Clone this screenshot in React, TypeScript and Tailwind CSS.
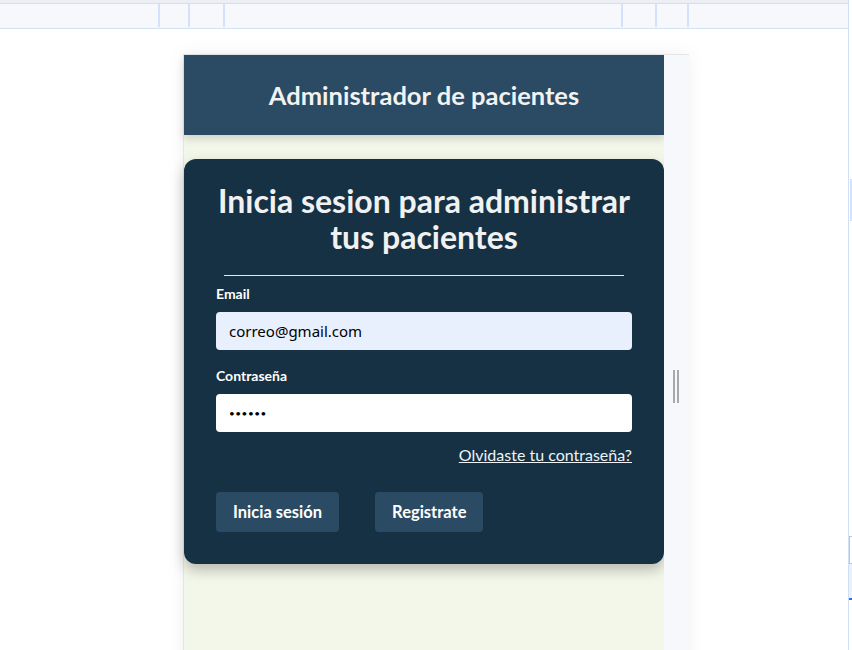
import { useState } from 'react'

const font = { fontFamily: 'Lato, "Noto Sans", sans-serif' }

function TopRuler() {
  return (
    <div className="flex flex-col">
      <div className="h-[4px] bg-[#eceef3] border-b border-[#cfdff8]" />
      <div className="h-[25px] bg-[#f7f8fc] border-b border-[#d3e1f3] flex items-stretch pb-[1px]">
        <div className="w-[160px] border-r-2 border-[#d2e2fb]" />
        <div className="w-[30px] border-r-2 border-[#d2e2fb]" />
        <div className="w-[35px] border-r-2 border-[#d2e2fb]" />
        <div className="w-[398px] border-r-2 border-[#d2e2fb]" />
        <div className="w-[34px] border-r-2 border-[#d2e2fb]" />
        <div className="w-[32px] border-r-2 border-[#d2e2fb]" />
        <div className="flex-1" />
      </div>
    </div>
  )
}

function LoginCard() {
  const [email, setEmail] = useState('correo@gmail.com')
  const [password, setPassword] = useState('123456')

  return (
    <div className="mt-[24px] bg-[#163144] rounded-[12px] px-[32px] pt-[24px] pb-[32px] shadow-[0_6px_14px_rgba(0,0,0,0.25)]">
      <h2 className="text-[32px] leading-[36px] font-bold text-center text-[#f1f1f1]">
        Inicia sesion para administrar tus pacientes
      </h2>
      <hr className="w-[400px] mx-auto mt-[20px] border-0 border-t border-[#e8e8e8]" />

      {/* Email */}
      <label className="block mt-[10px] text-[14px] leading-[16px] font-bold text-white">Email</label>
      <input
        type="email"
        value={email}
        onChange={(e) => setEmail(e.target.value)}
        className="mt-[10px] w-full h-[38px] rounded-[4px] bg-[#e8f0fe] px-[13px] text-[15px] text-black outline-none"
        style={{ fontFamily: '"Noto Sans", sans-serif' }}
      />

      {/* Password */}
      <label className="block mt-[18px] text-[14px] leading-[16px] font-bold text-white">Contraseña</label>
      <input
        type="password"
        value={password}
        onChange={(e) => setPassword(e.target.value)}
        className="mt-[10px] w-full h-[38px] rounded-[4px] bg-white px-[13px] text-[10px] tracking-[0.5px] text-black outline-none"
      />

      <div className="flex justify-end mt-[13px]">
        <a href="#" className="text-[16px] leading-[20px] text-[#eef3f7] underline">
          Olvidaste tu contraseña?
        </a>
      </div>

      <div className="flex gap-[36px] mt-[27px]">
        <button className="h-[40px] px-[17px] rounded-[4px] bg-[#2a4b63] text-white text-[16.5px] font-bold">
          Inicia sesión
        </button>
        <button className="h-[40px] px-[17px] rounded-[4px] bg-[#2a4b63] text-white text-[16.5px] font-bold">
          Registrate
        </button>
      </div>
    </div>
  )
}

export default function App() {
  return (
    <div className="w-[852px] h-[650px] overflow-hidden bg-white flex" style={font}>
      <div className="w-[848px] flex flex-col">
        <TopRuler />
        <div className="flex-1 pt-[25px] overflow-hidden">
          <div className="ml-[183px] w-[506px] h-[620px] flex border-l border-t border-[#e6e6e6] shadow-[0_0_18px_rgba(0,0,0,0.06)]">
            <div className="w-[480px] bg-[#f3f7e9] flex flex-col">
              <header className="h-[80px] bg-[#2a4b63] flex items-center justify-center shadow-[0_4px_8px_rgba(0,0,0,0.15)]">
                <h1 className="text-[25.5px] font-bold text-[#f2f2f2]">Administrador de pacientes</h1>
              </header>
              <LoginCard />
            </div>
            {/* resize strip */}
            <div className="w-[25px] bg-[#f7f8fc] pt-[315px] pl-[9px]">
              <div className="flex gap-[2px]">
                <div className="w-[2px] h-[33px] bg-[#a9a9a9]" />
                <div className="w-[2px] h-[33px] bg-[#a9a9a9]" />
              </div>
            </div>
          </div>
        </div>
      </div>
      <div className="w-[4px] border-l border-[#cfdff8] flex flex-col">
        <div className="h-[179px]" />
        <div className="ml-[1px] w-[2px] h-[42px] bg-[#d3e2fb]" />
        <div className="h-[315px]" />
        <div className="ml-[0px] w-[3px] h-[28px] border border-[#c4c4c4] border-r-0" />
        <div className="h-[34px] bg-[#eef0f7]" />
        <div className="w-[3px] h-[2px] bg-[#2f6fe0]" />
      </div>
    </div>
  )
}
